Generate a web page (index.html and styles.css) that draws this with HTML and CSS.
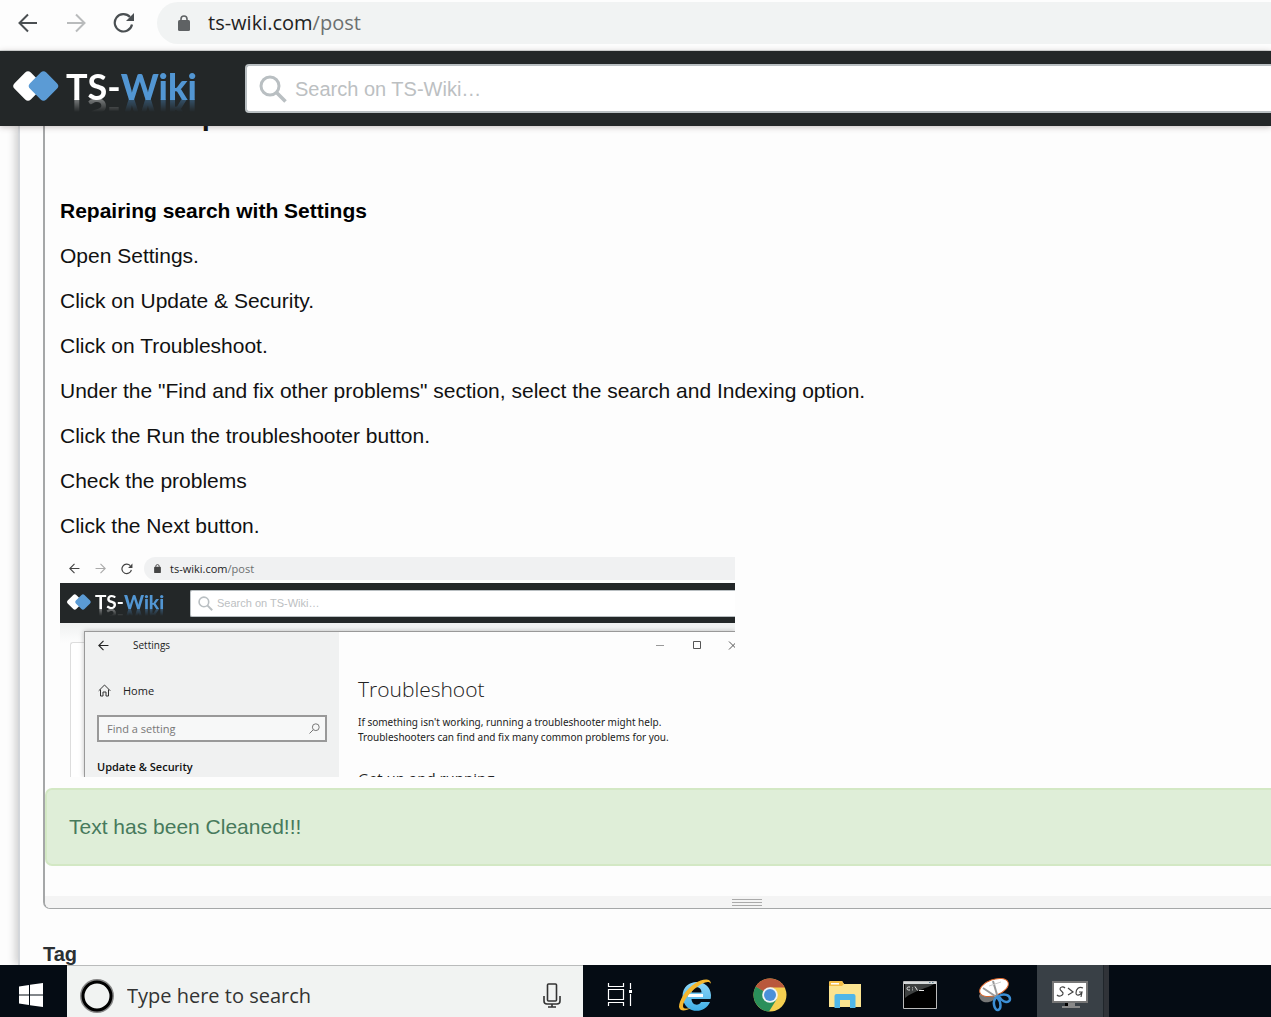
FILE: index.html
```html
<!DOCTYPE html>
<html lang="en">
<head>
<meta charset="utf-8">
<title>TS-Wiki</title>
<link rel="stylesheet" href="styles.css">
</head>
<body>
<svg class="sprite" aria-hidden="true">
  <symbol id="back" viewBox="0 0 20 20"><path d="M19 10H1.5M10 1.5 1.5 10 10 18.5" fill="none" stroke="currentColor" stroke-width="2"/></symbol>
  <symbol id="forward" viewBox="0 0 20 20"><path d="M1 10h17.5M10 1.5 18.500 10 10 18.500" fill="none" stroke="currentColor" stroke-width="2"/></symbol>
  <symbol id="reload" viewBox="0 0 22 22"><path d="M19 12.500A8.700 8.700 0 1 1 17 5" fill="none" stroke="currentColor" stroke-width="2.200"/><path d="M21 1v8h-8z" fill="currentColor"/></symbol>
  <symbol id="lock" viewBox="0 0 12 16"><rect y="5" width="12" height="11" rx="1.500" fill="currentColor"/><path d="M3 6V4a3 3 0 0 1 6 0v2" fill="none" stroke="currentColor" stroke-width="1.600"/></symbol>
  <symbol id="diamonds" viewBox="0 0 48 34"><rect x="4.500" y="5.500" width="23" height="23" rx="4" transform="rotate(45 16 17)" fill="#fff"/><rect x="20" y="5.500" width="23" height="23" rx="4" transform="rotate(45 31.500 17)" fill="#5b9bd5"/></symbol>
  <symbol id="glass" viewBox="0 0 28 28"><circle cx="11" cy="11" r="9" fill="none" stroke="currentColor" stroke-width="3"/><path d="m17.500 17.500 9 9" stroke="currentColor" stroke-width="3.600"/></symbol>
</svg>

<div class="screen">
  <div class="browser-bar">
    <button class="nav" aria-label="Back"><svg width="20" height="20"><use href="#back"/></svg></button>
    <button class="nav nav-off" aria-label="Forward"><svg width="20" height="20"><use href="#forward"/></svg></button>
    <button class="nav" aria-label="Reload"><svg width="22" height="22"><use href="#reload"/></svg></button>
    <div class="address"><svg width="12" height="16"><use href="#lock"/></svg><span class="url">ts-wiki.com<span>/post</span></span></div>
  </div>

  <header class="site-header">
    <a class="logo" href="#"><svg width="48" height="34"><use href="#diamonds"/></svg><span class="wordmark">TS-<b>Wiki</b></span></a>
    <label class="search"><svg width="28" height="28"><use href="#glass"/></svg><input type="text" aria-label="Search" placeholder="Search on TS-Wiki…"></label>
  </header>

  <main class="page">
    <div class="panel">
      <section class="editor">
        <div class="editor-text">
          <h2>Search Repair</h2>
          <h3>Repairing search with Settings</h3>
          <p>Open Settings.</p>
          <p>Click on Update &amp; Security.</p>
          <p>Click on Troubleshoot.</p>
          <p>Under the "Find and fix other problems" section, select the search and Indexing option.</p>
          <p>Click the Run the troubleshooter button.</p>
          <p>Check the problems</p>
          <p>Click the Next button.</p>
          <figure class="shot">
            <div class="shot-bar">
              <svg width="11" height="11"><use href="#back"/></svg>
              <svg class="faded" width="11" height="11"><use href="#forward"/></svg>
              <svg width="12" height="12"><use href="#reload"/></svg>
              <div class="shot-address"><svg width="7" height="9"><use href="#lock"/></svg><span class="url">ts-wiki.com<span>/post</span></span></div>
            </div>
            <div class="shot-header">
              <div class="logo"><svg width="26" height="18"><use href="#diamonds"/></svg><span class="wordmark">TS-<b>Wiki</b></span></div>
              <label class="search"><svg width="15" height="15"><use href="#glass"/></svg><input type="text" aria-label="Search in picture" placeholder="Search on TS-Wiki…"></label>
            </div>
            <div class="shot-body">
              <div class="shot-edge"></div>
              <div class="window">
                <div class="sidebar">
                  <div class="side-title"><svg width="11" height="11"><use href="#back"/></svg><span>Settings</span></div>
                  <div class="side-home"><svg width="13" height="13" viewBox="0 0 13 13" fill="none" stroke="#333"><path d="M.7 6.800 6.500 1l5.800 5.800M2.500 5.500v6.500H5V8h3v4h2.500V5.500"/></svg><span>Home</span></div>
                  <label class="side-find"><input type="text" aria-label="Find a setting" placeholder="Find a setting"><svg width="11" height="11" viewBox="0 0 11 11" fill="none" stroke="#777"><circle cx="6.800" cy="4.200" r="3.400"/><path d="M4.300 6.700.5 10.500"/></svg></label>
                  <div class="side-section">Update &amp; Security</div>
                </div>
                <div class="detail">
                  <svg class="controls" width="79" height="10" viewBox="0 0 79 10" fill="none" stroke="#555"><path d="M0 5.500h8" stroke="#999"/><path d="M37.500 1.500h7v7h-7z"/><path d="m73 1.500 8 8m0-8-8 8"/></svg>
                  <h4>Troubleshoot</h4>
                  <p>If something isn't working, running a troubleshooter might help.<br>Troubleshooters can find and fix many common problems for you.</p>
                  <h5>Get up and running</h5>
                </div>
              </div>
            </div>
          </figure>
        </div>
        <div class="alert" role="status">Text has been Cleaned!!!</div>
        <div class="resizer"><span class="grip"></span></div>
      </section>
      <div class="tag">Tag</div>
    </div>
  </main>

  <footer class="taskbar">
    <button class="start" aria-label="Start"><svg width="24" height="24" viewBox="0 0 24 24" fill="#fff"><path d="M0 3.400 10 2v9.500H0zM11 1.800 24 0v11.500H11zM0 12.500h10V22L0 20.600zM11 12.500h13V24l-13-1.800z"/></svg></button>
    <label class="cortana">
      <svg width="34" height="34" viewBox="0 0 34 34" fill="none"><circle cx="17" cy="17" r="15.700" stroke="#858585" stroke-width="2.500"/><circle cx="17" cy="17" r="14" stroke="#000" stroke-width="3"/></svg>
      <input type="text" aria-label="Taskbar search" placeholder="Type here to search">
      <svg width="18" height="26" viewBox="0 0 18 26" fill="none" stroke="#333" stroke-width="1.600"><rect x="4.500" y="1" width="9" height="17" rx="1"/><path d="M1 13v5q0 3 3 3h10q3 0 3-3v-5M9 21v3M5 24h8"/></svg>
    </label>
    <nav class="apps">
      <button aria-label="Task view"><svg width="26" height="26" viewBox="0 0 26 26" fill="none" stroke="#fff" stroke-width="1.200"><path d="M1.500 1v3.500h15V1M1.500 7.500h15v10h-15zM1.500 24v-3.500h15V24M23.500 1v6M23.500 12v12"/><path d="M22 8h3v3h-3z" fill="#fff" stroke="none"/></svg></button>
      <button aria-label="Internet Explorer"><svg width="36" height="36" viewBox="0 0 36 36" fill="none"><defs><linearGradient id="ie" x2="0" y2="1"><stop stop-color="#8fd8f8"/><stop offset="1" stop-color="#3eaee6"/></linearGradient></defs><path d="M33.500 22H14.500c.5 7 7.500 7 9.500 3h9C28 38 7 37 5.500 20 5 .5 33 .5 34 18q0 3-.5 4zM14.500 15.500h10c0-7-9.500-7-10 0z" fill="url(#ie)"/><path d="M11 17h15v3H11z" fill="#fff"/><path d="M34 7C34 .5 25 1.500 18 6.500 9 12 2 23 2 30c1 5 7 4 12 1-5 1-8 1-8-2 0-5 7-14 14-19 5-4 12-7 14-3z" fill="#f5b82e"/></svg></button>
      <button aria-label="Chrome"><svg width="34" height="34" viewBox="0 0 34 34"><circle cx="17" cy="17" r="16.500" fill="#f5cf50"/><path d="M17 17 2.700 8.800A16.500 16.500 0 0 0 16 33.500l7.500-12z" fill="#2a8f5a"/><path d="M17 17 2.700 8.800a16.500 16.500 0 0 1 29 .7H17l-6.800 11.400z" fill="#b9583c"/><path d="M2.700 8.800 10 21l7-4z" fill="#2a8f5a"/><circle cx="17" cy="17" r="7.800" fill="#eef3f5"/><circle cx="17" cy="17" r="6" fill="#4a90d9"/></svg></button>
      <button aria-label="File Explorer"><svg width="32" height="28" viewBox="0 0 32 28"><path d="M0 1.500Q0 0 1.500 0H13l2 3h17v23H0z" fill="#fbe490"/><path d="M0 5V1.500Q0 0 1.500 0H13l2 3-2 2z" fill="#f3bd45"/><path d="M2 2h8v1.500H2z" fill="#fff"/><path d="M5.500 27V15q0-2 2-2h17q2 0 2 2v12H21v-8H11v8z" fill="#4fb6e8"/></svg></button>
      <button aria-label="Command Prompt"><svg width="34" height="28" viewBox="0 0 34 28"><path d="M.5.5h33v27H.5z" fill="#000" stroke="#bbb"/><path d="M1 1h32v2H1z" fill="#d5d9da"/><path d="M2 3h29C25 7 10 10 2 17z" fill="#3d4040"/><path d="M7 6H5.500Q4 6 4 7.500T5.500 9H7M9.500 6.500v.8M9.500 8.500v.8M12 5.500l2.500 4M16 9.500h5" stroke="#e5e5e5" fill="none"/><path d="M26 1.500h1.500M29 1.500h1.500" stroke="#578"/></svg></button>
      <button aria-label="Snipping Tool"><svg width="34" height="36" viewBox="0 0 34 36" fill="none"><path d="M1 19c1-6 15-5 19-1-4 8-17 11-19 1z" fill="#777"/><ellipse cx="16" cy="10.500" rx="15" ry="8" transform="rotate(-20 16 10.500)" fill="#fff" stroke="#d9652b"/><path d="m5 11 15 10M15 4l5 17" stroke="#999" stroke-width="2"/><path d="m11 9 12-4" stroke="#ccc"/><path d="M19 20c-6 4-2 14 1 13s4-7-1-13zm2-1c4 8 11 7 11 3s-6-6-11-3z" stroke="#3c8fd6" stroke-width="2.500"/></svg></button>
      <button class="active" aria-label="Screen to Gif"><svg width="36" height="28" viewBox="0 0 36 28" fill="none"><path d="M1 1h34v20H1z" fill="#fff" stroke="#777" stroke-width="2"/><path d="M16 22h7v3h5v2H10v-2h6z" fill="#888"/><path d="M13 22h3v3h-3z" fill="#000"/><path d="M13 7c-2-2-5-1-5 1s4 3 3 5-4 3-6 1M16 7l5 4-5 3M31 7c-4-2-7 1-7 5 0 3 4 3 6-1h-3 3l-1 5" stroke="#444" stroke-width="1.200"/></svg></button>
    </nav>
  </footer>
</div>
</body>
</html>
```

FILE: styles.css
```css
* { box-sizing: border-box; }
body {
  margin: 0;
  background: #fdfdfd;
  color: #111;
  font: 20px/24px "Liberation Sans", Arial, sans-serif;
}
h2, h3, h4, h5, p, figure { margin: 0; }
button { border: 0; padding: 0; background: none; display: flex; align-items: center; justify-content: center; }
input { border: 0; padding: 0; background: none; outline: 0; font: inherit; flex: 1; min-width: 0; }
svg { flex: none; display: block; }
.sprite { position: absolute; width: 0; height: 0; }

.screen { display: flex; flex-direction: column; height: 100vh; overflow: hidden; }

/* Browser toolbar */
.browser-bar {
  display: flex;
  align-items: center;
  height: 51px;
  flex: none;
  padding: 0 0 5px 4px;
  border-bottom: 1px solid #d8dcdc;
}
.nav { width: 48px; height: 40px; color: #4a4f52; }
.nav-off { color: #b9bbbc; }
.address {
  display: flex;
  align-items: center;
  gap: 18px;
  flex: 1;
  height: 42px;
  margin-left: 9px;
  padding-left: 21px;
  border-radius: 21px 0 0 21px;
  background: #f1f3f3;
  color: #5f6264;
}
.url { font-family: "Open Sans", sans-serif; color: #222; }
.url span { color: #6c7070; }

/* Site header */
.site-header {
  display: flex;
  align-items: center;
  flex: none;
  height: 75px;
  padding-left: 12px;
  background: #232728;
  position: relative;
  box-shadow: 0 1px 6px rgba(60, 40, 40, .3);
}
.logo { display: flex; align-items: center; gap: 6px; width: 233px; padding-bottom: 6px; text-decoration: none; }
.wordmark {
  font: bold 36px/26px Lato, sans-serif;
  color: #fff;
  -webkit-box-reflect: below 0 linear-gradient(transparent 50%, rgba(0, 0, 0, .4));
}
.wordmark b { color: #5296d3; }
.search {
  display: flex;
  align-items: center;
  gap: 8px;
  flex: 1;
  height: 49px;
  padding-left: 12px;
  border: 2px solid #b9bfc2;
  border-right: 0;
  border-radius: 4px 0 0 4px;
  background: #fff;
  color: #b9bfc2;
}
.search input::placeholder { color: #bcc0c2; opacity: 1; }

/* Page */
.page { flex: 1; min-height: 0; overflow: hidden; padding-left: 18px; }
.panel { border-left: 2px solid #d3d6da; box-shadow: -3px 0 8px rgba(0, 0, 0, .18); padding-left: 23px; height: 100%; font-size: 21px; }
.editor {
  margin-right: -178px;
  border: solid #a5a7a8;
  border-width: 0 0 1px 2px;
  border-radius: 0 0 0 7px;
  overflow: hidden;
}
.editor-text { padding-left: 15px; }
.editor h2 { font-size: 29px; line-height: 32px; margin-top: -27px; margin-bottom: 68px; }
.editor h3 { font-size: 21px; color: #000; }
.editor-text > p, .editor h3 { margin-bottom: 21px; }
.alert {
  margin-top: 11px;
  padding: 25px 22px;
  border: 2px solid #d3e8c4;
  border-radius: 7px;
  background: #dfeed8;
  color: #477a5c;
}
.resizer { display: flex; justify-content: center; align-items: center; height: 12px; margin-top: 30px; background: #f4f4f4; }
.grip { width: 30px; height: 7px; border: solid #aaa; border-width: 1px 0; background: linear-gradient(#aaa, #aaa) center / 100% 1px no-repeat; }
.tag { margin-top: 33px; color: #2b3033; font-size: 20px; font-weight: bold; }

/* Picture inside the post */
.shot { width: 675px; height: 220px; margin-top: -2px; overflow: hidden; display: flex; flex-direction: column; font: 10px/15px "Open Sans", sans-serif; color: #222; }
.shot-bar { display: flex; flex: none; align-items: center; gap: 15px; height: 26px; padding: 0 0 3px 9px; color: #444; }
.shot .faded { color: #aaa; }
.shot-address { display: flex; align-items: center; gap: 9px; flex: 1; height: 23px; margin-left: -4px; padding-left: 10px; border-radius: 12px 0 0 12px; background: #f0f1f2; font-size: 11px; }
.shot-header { display: flex; flex: none; align-items: center; height: 40px; padding-left: 6px; background: #232728; }
.shot .logo { width: 124px; gap: 3px; padding-bottom: 3px; }
.shot .wordmark { font-size: 19px; line-height: 14px; }
.shot .search { height: 27px; gap: 4px; padding-left: 7px; border-width: 1px 0 1px 1px; border-radius: 2px 0 0 2px; font: 11px/15px "Liberation Sans", sans-serif; }
.shot-body { display: flex; flex: 1; min-height: 0; padding-top: 8px; background: linear-gradient(#eff1f1, #fdfdfd 20px); }
.shot-edge { width: 14px; margin: 11px 0 0 10px; border: solid #ddd; border-width: 1px 0 0 1px; border-radius: 3px 0 0 0; background: #fff; }
.window { display: flex; flex: 1; border: solid #999; border-width: 1px 0 0 1px; background: #fdfdfd; box-shadow: 0 0 5px rgba(0, 0, 0, .25); }
.sidebar { display: flex; flex-direction: column; width: 254px; padding: 6px 12px 0; background: #f0f1f1; }
.side-title { display: flex; align-items: center; gap: 24px; padding-left: 1px; }
.side-home { display: flex; align-items: center; gap: 12px; margin-top: 30px; padding-left: 1px; font-size: 11px; }
.side-find { display: flex; align-items: center; height: 27px; margin-top: 17px; padding: 0 5px 0 8px; border: 2px solid #999; background: #f7f8f8; font-size: 11px; }
.side-find input::placeholder { color: #777; opacity: 1; }
.side-section { margin-top: 17px; font-size: 11px; font-weight: 600; color: #111; }
.detail { flex: 1; padding: 8px 0 0 19px; }
.controls { margin-left: auto; }
.detail h4 { margin: 24px 0 11px; font-size: 21px; line-height: 30px; font-weight: 300; }
.detail p { font-family: "Noto Sans", sans-serif; white-space: nowrap; }
.detail h5 { margin-top: 23px; font-size: 15px; line-height: 20px; font-weight: 400; }

/* Windows taskbar */
.taskbar { display: flex; flex: none; height: 52px; background: #050c14; position: relative; }
.start { width: 67px; padding: 8px 5px 0 0; }
.cortana { display: flex; align-items: center; width: 516px; padding: 8px 22px 0 13px; gap: 13px; border-top: 1px solid #b9bbbb; background: #f1f3f2; font-family: "Open Sans", sans-serif; }
.cortana input::placeholder { color: #333; opacity: 1; }
.apps { display: flex; gap: 9px; padding-left: 4px; }
.apps button { width: 66px; padding-top: 7px; }
.apps .active { background: #394046; box-shadow: 1px 0 #20262b, 6px 0 #303338; }
```
